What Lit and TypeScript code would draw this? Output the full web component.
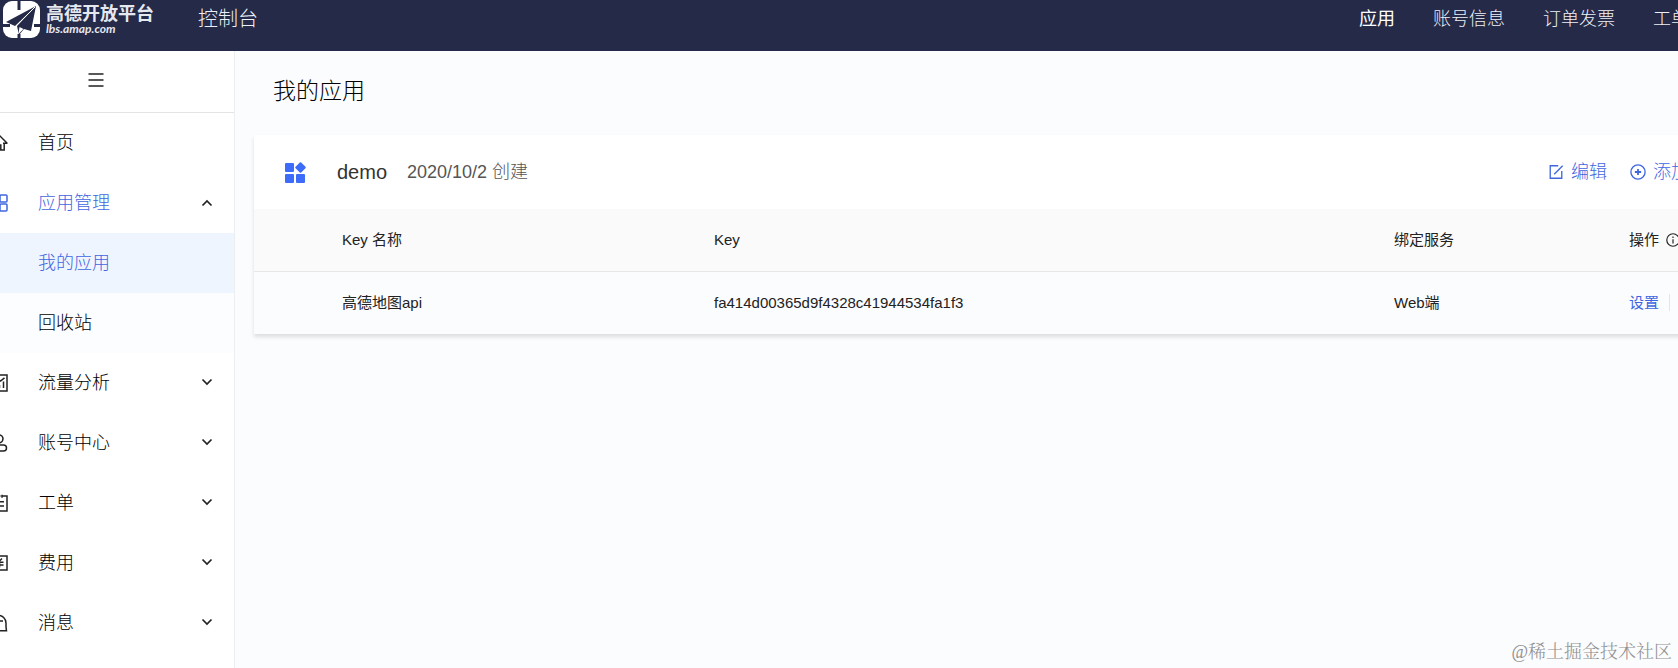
import { LitElement, html, css, svg, nothing } from "lit";
import { customElement, state } from "lit/decorators.js";

const icon = (body: unknown, size = 18) => html`<svg
  width=${size} height=${size} viewBox="0 0 18 18" fill="none" stroke="currentColor"
  stroke-width="1.5" aria-hidden="true">${body}</svg>`;

const icons: Record<string, unknown> = {
  home: svg`<path d="M.8 9.2 9 1l8.2 8.2M3.8 8.500v7.500h3.600v-5h3.400v5h3.400V9M13 9.200h4.500"/>`,
  grid: svg`<rect x="1" y="1" width="7" height="7" rx="1"/><rect x="10" y="1" width="7" height="7" rx="1"/><rect x="1" y="10" width="7" height="7" rx="1"/><rect x="10" y="10" width="7" height="7" rx="1"/>`,
  chart: svg`<rect x="1" y="1" width="16" height="16"/><path d="M5 14V9.500M9.500 14v-3M13.500 14V7.500M4 8l4-3 2.500 2L14.500 3.800"/>`,
  user: svg`<circle cx="9" cy="4.800" r="4"/><path d="M4.500 11h9a3 3 0 0 1 0 6h-9a3 3 0 0 1 0-6z"/>`,
  order: svg`<path d="M12.500 2H17v15H1V2h4.500M7.500 2h3M6 .8v3M12 .8v3M5 7.800h9M5 12h9"/>`,
  fee: svg`<rect x="1" y="2" width="16" height="14"/><path d="M6.500 4.500 9 7.500l3-3M5.500 8.200h8M5.500 11h8M9.500 8v5.500"/>`,
  message: svg`<path d="M16.500 16.800H8.500A7.800 7.800 0 1 1 16 9v4zM6 7h7"/>`,
};

interface MenuItem {
  icon: string;
  label: string;
  children?: { label: string; active?: boolean }[];
}

const menu: MenuItem[] = [
  { icon: "home", label: "首页" },
  { icon: "grid", label: "应用管理", children: [{ label: "我的应用", active: true }, { label: "回收站" }] },
  { icon: "chart", label: "流量分析", children: [] },
  { icon: "user", label: "账号中心", children: [] },
  { icon: "order", label: "工单", children: [] },
  { icon: "fee", label: "费用", children: [] },
  { icon: "message", label: "消息", children: [] },
];

@customElement("app-header")
class AppHeader extends LitElement {
  static styles = css`
    :host { display: flex; align-items: flex-start; height: 51px; overflow: hidden; background: #242a48; color: #eef0f8; }
    a { color: inherit; text-decoration: none; }
    .logo { display: flex; gap: 6px; padding: 1px 0 0 3px; color: #e6e8f0; }
    .brand { display: flex; flex-direction: column; font-weight: 700; padding-top: 4px; }
    .name { font-size: 18px; line-height: 18px; }
    .domain { font: italic 700 12px/12px Lato, "Liberation Sans", sans-serif; }
    .console { margin-left: 44px; font-size: 20px; line-height: 38px; }
    nav { display: flex; gap: 38px; margin: 0 -11px 0 auto; font-size: 18px; line-height: 38px; white-space: nowrap; }
    .current { color: #fff; font-weight: 400; }
  `;
  render() {
    return html`
      <a class="logo" href="#">
        <svg width="37" height="37" viewBox="0 0 37 37" aria-hidden="true">
          <rect width="37" height="37" rx="9" fill="#fff"/>
          <path d="M16 0v9M0 24.500h7M31 24.500h6M16 33v4" stroke="#242a48" stroke-width="3"/>
          <path d="M33 5 3 21l9 4zM33 5 14 25l2 9 5-6 7 2z" fill="#242a48"/>
          <path d="M32 6 13 25" stroke="#fff" stroke-width="1"/>
          <path d="m15.500 33 1-7 4 2z" fill="#fff"/>
        </svg>
        <span class="brand"><span class="name">高德开放平台</span><span class="domain">lbs.amap.com</span></span>
      </a>
      <a class="console" href="#">控制台</a>
      <nav>
        <a class="current" href="#">应用</a><a href="#">账号信息</a><a href="#">订单发票</a><a href="#">工单</a>
      </nav>`;
  }
}

@customElement("app-sidebar")
class AppSidebar extends LitElement {
  @state() private open = "应用管理";

  static styles = css`
    :host { display: block; box-sizing: border-box; width: 235px; flex: none; overflow: hidden; background: #fff; border-right: 1px solid #eceeef; font-size: 18px; line-height: 24px; color: #000; }
    button, a { font: inherit; color: inherit; text-decoration: none; border: 0; background: none; padding: 0; cursor: pointer; }
    .toggle { display: flex; align-items: center; width: 100%; height: 62px; padding: 0 0 3px 88px; box-sizing: border-box; border-bottom: 1px solid #e3e4e5; }
    .row { display: flex; align-items: center; width: 100%; height: 60px; box-sizing: border-box; padding-right: 21px; text-align: left; }
    .row > svg { flex: none; }
    .glyph { display: flex; justify-content: flex-end; flex: none; width: 8px; color: #222; }
    .glyph svg { flex: none; }
    .label { flex: 1; margin-left: 30px; }
    .opened .glyph, .opened .label { color: #3f66e0; }
    .sub { display: flex; align-items: center; height: 60px; padding-left: 38px; background: #fbfdfe; }
    .active { background: #eff5ff; color: #3f66e0; }
  `;

  private row(item: MenuItem) {
    const opened = this.open === item.label;
    if (!item.children) {
      return html`<a class="row" href="#"><span class="glyph">${icon(icons[item.icon])}</span><span class="label">${item.label}</span></a>`;
    }
    return html`
      <button class="row ${opened ? "opened" : ""}" aria-expanded=${opened}
        @click=${() => (this.open = opened ? "" : item.label)}>
        <span class="glyph">${icon(icons[item.icon])}</span>
        <span class="label">${item.label}</span>
        <svg width="12" height="12" viewBox="0 0 12 12" fill="none" stroke="#222" stroke-width="1.700" aria-hidden="true">
          <path d=${opened ? "M1.500 8.500 6 4l4.500 4.500" : "M1.500 2.500 6 7l4.500-4.500"}/>
        </svg>
      </button>
      ${opened ? item.children.map((c) => html`<a class="sub ${c.active ? "active" : ""}" href="#">${c.label}</a>`) : nothing}`;
  }

  render() {
    return html`
      <button class="toggle" aria-label="菜单">
        <svg width="16" height="16" viewBox="0 0 16 16" stroke="#222" stroke-width="1.300" aria-hidden="true"><path d="M.5 2h15M.5 8h15M.5 14h15"/></svg>
      </button>
      <nav>${menu.map((m) => this.row(m))}</nav>`;
  }
}

@customElement("app-card")
class AppCard extends LitElement {
  static styles = css`
    :host { display: block; background: #fff; box-shadow: 0 3px 4px rgba(0, 0, 0, 0.12); color: #222; line-height: 24px; }
    .head { display: flex; align-items: center; height: 74px; padding-left: 31px; box-sizing: border-box; }
    h2 { margin: 0 20px 0 31px; font-size: 20px; font-weight: 400; color: #333; }
    .date { font-size: 18px; color: #555; }
    .actions { display: flex; gap: 23px; margin-left: auto; padding-right: 29px; }
    button { display: flex; align-items: center; gap: 7px; padding: 0; border: 0; background: none; font: inherit; font-size: 18px; color: #3f66e0; cursor: pointer; }
    table { width: 100%; table-layout: fixed; border-collapse: collapse; font-size: 15px; }
    th, td { height: 62px; padding: 0; text-align: left; font-weight: 400; white-space: nowrap; }
    th { background: #fafafa; border-bottom: 1px solid #e6e8ea; }
    td { background: #fbfcfe; }
    th:first-child, td:first-child { padding-left: 88px; }
    .c-name { width: 460px; }
    .c-service { width: 235px; }
    .c-ops { width: 89px; }
    .ops { display: flex; align-items: center; gap: 7px; }
    .link { color: #3f66e0; text-decoration: none; padding-right: 10px; margin-right: 10px; border-right: 1px solid #e3e5e8; }
  `;
  render() {
    return html`
      <div class="head">
        <svg width="21" height="21" viewBox="0 0 21 21" fill="#3d6bfa" aria-hidden="true">
          <rect y="1" width="9" height="9" rx="1"/><rect y="12" width="9" height="9" rx="1"/><rect x="11" y="12" width="9" height="9" rx="1"/>
          <rect x="11.500" y="1.500" width="8" height="8" rx="1" transform="rotate(45 15.500 5.500)"/>
        </svg>
        <h2>demo</h2>
        <span class="date">2020/10/2 创建</span>
        <div class="actions">
          <button>${icon(svg`<path d="M11.500 2H2.500v14h13V8M7 11.500 16.500 2"/>`, 16)}编辑</button>
          <button>${icon(svg`<circle cx="9" cy="9" r="8"/><path d="M9 5.500v7M5.500 9h7" stroke-width="2"/>`, 16)}添加</button>
        </div>
      </div>
      <table>
        <colgroup><col class="c-name"><col><col class="c-service"><col class="c-ops"></colgroup>
        <thead><tr><th>Key 名称</th><th>Key</th><th>绑定服务</th>
          <th><span class="ops">操作 ${icon(svg`<circle cx="9" cy="9" r="8"/><path d="M9 8v5.500M9 4.500v2"/>`, 14)}</span></th></tr></thead>
        <tbody><tr><td>高德地图api</td><td>fa414d00365d9f4328c41944534fa1f3</td><td>Web端</td>
          <td><a class="link" href="#">设置</a></td></tr></tbody>
      </table>`;
  }
}

@customElement("app-root")
class AppRoot extends LitElement {
  static styles = css`
    :host { display: flex; flex-direction: column; position: relative; min-height: 100vh; overflow: hidden; background: #fbfcfe; font-family: "Liberation Sans", "Noto Sans CJK SC", sans-serif; font-weight: 300; }
    .body { display: flex; flex: 1; }
    main { flex: 1; min-width: 0; padding-left: 19px; }
    h1 { margin: 0; padding: 24px 0 27px 19px; font-size: 23px; line-height: 33px; font-weight: inherit; color: #000; }
    app-card { margin-right: -40px; }
    .mark { position: absolute; right: 6px; bottom: 3px; font: 18px/26px "Liberation Serif", "Noto Serif CJK SC", "Noto Sans CJK SC", serif; font-weight: 300; color: #909090; }
  `;
  render() {
    return html`
      <app-header></app-header>
      <div class="body">
        <app-sidebar></app-sidebar>
        <main><h1>我的应用</h1><app-card></app-card></main>
      </div>
      <span class="mark">@稀土掘金技术社区</span>`;
  }
}
